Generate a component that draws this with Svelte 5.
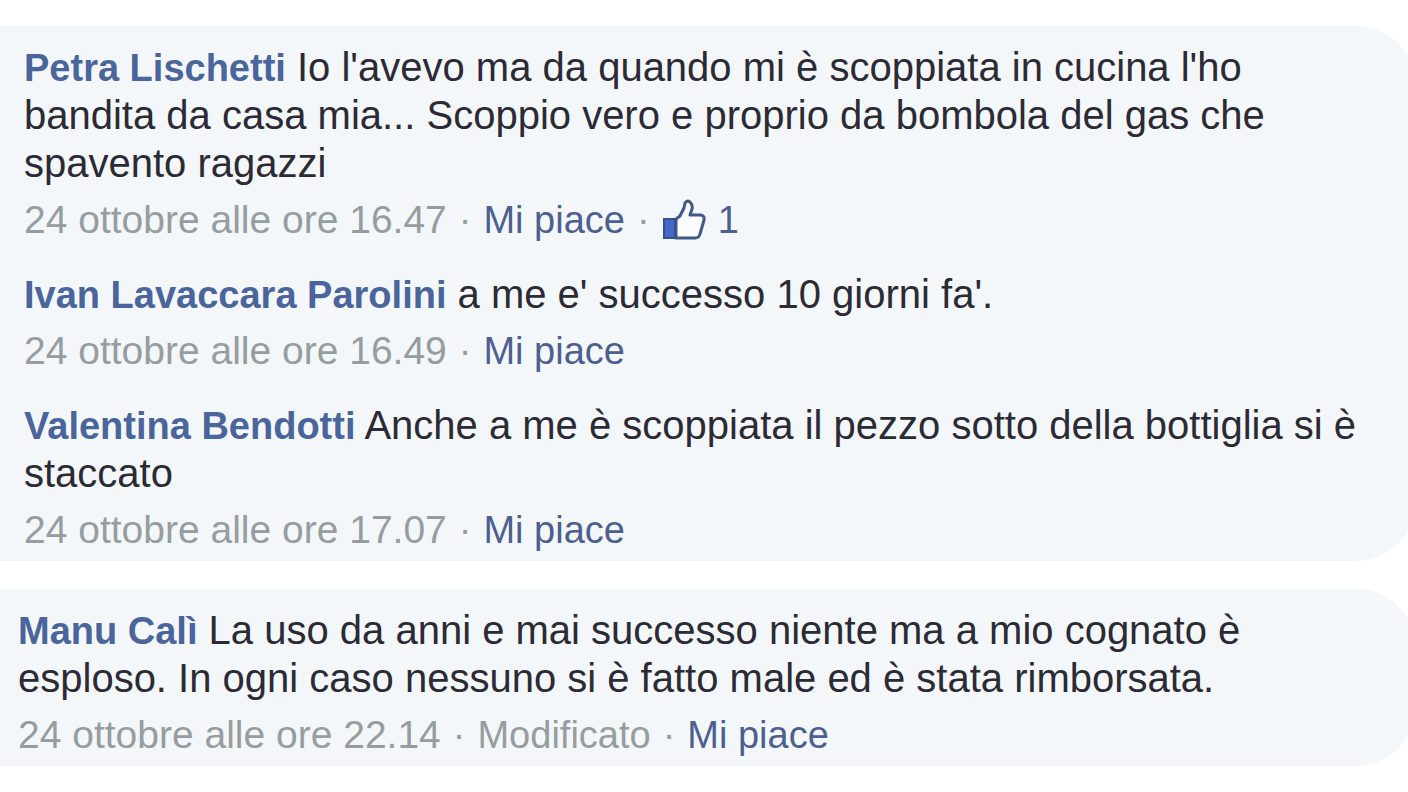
<script lang="ts">
    interface Comment
    {
        author: string;
        text: string;
        time: string;
        edited?: boolean;
        likes?: number;
    }

    const threads: Comment[][] = [
        [
            {
                author: 'Petra Lischetti',
                text: "Io l'avevo ma da quando mi è scoppiata in cucina l'ho bandita da casa mia... Scoppio vero e proprio da bombola del gas che spavento ragazzi",
                time: '24 ottobre alle ore 16.47',
                likes: 1
            },
            {
                author: 'Ivan Lavaccara Parolini',
                text: "a me e' successo 10 giorni fa'.",
                time: '24 ottobre alle ore 16.49'
            },
            {
                author: 'Valentina Bendotti',
                text: 'Anche a me è scoppiata il pezzo sotto della bottiglia si è staccato',
                time: '24 ottobre alle ore 17.07'
            }
        ],
        [
            {
                author: 'Manu Calì',
                text: 'La uso da anni e mai successo niente ma a mio cognato è esploso. In ogni caso nessuno si è fatto male ed è stata rimborsata.',
                time: '24 ottobre alle ore 22.14',
                edited: true
            }
        ]
    ];
</script>

<main class="threads">
    {#each threads as comments}
        <section class="thread" class:is-single={comments.length === 1}>
            {#each comments as comment}
                <article class="comment">
                    <p class="body"><a class="author" href="#profile">{comment.author}</a> <span>{comment.text}</span></p>
                    <div class="meta">
                        <span class="time">{comment.time}</span>
                        <span>·</span>
                        {#if comment.edited}
                            <span>Modificato</span>
                            <span>·</span>
                        {/if}
                        <button type="button">Mi piace</button>
                        {#if comment.likes}
                            <span>·</span>
                            <a class="likes" href="#likes">
                                <svg viewBox="0 0 44 42" width="44" height="42" aria-hidden="true">
                                    <path d="M14 20 L18 17 L22 9 L23 4 Q25 1 28 3 Q31 6 30 10 L28 16 H39 Q43 17 42 21 L38 35 Q37 39 33 39 H14 Z" fill="#fbfcfe" stroke="#42578a" stroke-width="3" stroke-linejoin="round" />
                                    <path d="M2 20 H13 V39 H2 Z" fill="#4468c4" stroke="#34508f" stroke-width="2" />
                                </svg>
                                <span>{comment.likes}</span>
                            </a>
                        {/if}
                    </div>
                </article>
            {/each}
        </section>
    {/each}
</main>

<style>
    :global(body)
    {
        background: #ffffff;
    }

    .threads
    {
        display: flex;
        flex-direction: column;
        gap: 28px;
        padding: 26px 0;
        overflow: hidden;
        font-family: "Liberation Sans", Arial, sans-serif;
        font-size: 40px;
        line-height: 48px;
        color: #2b2a35;
    }

    /* the right corners run slightly past the window edge */
    .thread
    {
        display: flex;
        flex-direction: column;
        gap: 26px;
        margin-right: -8px;
        padding: 17px 48px 7px 24px;
        border-radius: 0 60px 60px 0;
        background: #f4f7f9;
    }

    .is-single
    {
        padding-left: 18px;
    }

    .body
    {
        margin: 0;
    }

    .author
    {
        color: #4a659c;
        font-size: 38px;
        font-weight: 700;
        line-height: 1;
        text-decoration: none;
    }

    .meta
    {
        display: flex;
        align-items: center;
        gap: 12px;
        margin-top: 9px;
        color: #969da0;
        font-size: 38px;
    }

    .time
    {
        font-size: 39px;
    }

    button
    {
        padding: 0;
        border: 0;
        background: none;
        color: #4d5f90;
        font: inherit;
        cursor: pointer;
    }

    .likes
    {
        display: flex;
        align-items: center;
        gap: 12px;
        color: #4d5f90;
        text-decoration: none;
    }
</style>
